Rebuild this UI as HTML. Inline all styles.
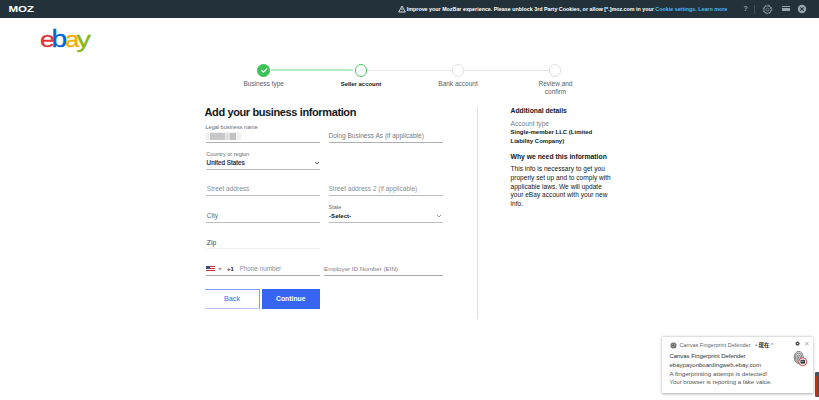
<!DOCTYPE html>
<html><head><meta charset="utf-8">
<style>
*{box-sizing:border-box;margin:0;padding:0}
html,body{width:819px;height:400px;overflow:hidden;background:#fff;font-family:"Liberation Sans",sans-serif;color:#111820}
.abs{position:absolute}
#bar{left:0;top:0;width:819px;height:17.5px;background:#23323a}
#moz{left:8.3px;top:5.2px;font-size:8px;font-weight:bold;color:#fff;letter-spacing:0px;line-height:8px;transform:scaleX(1.42);transform-origin:0 0}
#msg{left:406.8px;top:5.5px;font-size:5.35px;font-weight:bold;color:#fff;line-height:7px;white-space:nowrap}
#msg span{color:#4ab9f2}
.lbl{font-size:6.5px;color:#555e68;line-height:8.5px;text-align:center;width:60px;white-space:nowrap}
.circ{width:12.5px;height:12.5px;border-radius:50%;background:#fff;border:1px solid #e0e0e0}
.ph{font-size:6.55px;color:#8a9096;line-height:8px;white-space:nowrap}
.fl{font-size:5.55px;color:#626971;line-height:6px;white-space:nowrap}
.val{font-size:6px;color:#111820;line-height:8px;white-space:nowrap;font-weight:bold}
.ul{height:1px;background:#bbbec1}
.side{font-size:6.3px;line-height:9.3px;color:#111820}
</style></head><body>
<div class="abs" id="bar"></div>
<svg class="abs" style="left:0;top:0" width="60" height="17" viewBox="0 0 60 17"><text x="8.4" y="12.1" font-family="Liberation Sans, sans-serif" font-weight="bold" font-size="8.3" fill="#fff" textLength="25.7" lengthAdjust="spacingAndGlyphs">MOZ</text></svg>
<div class="abs" id="msg">Improve your MozBar experience. Please unblock 3rd Party Cookies, or allow [*.]moz.com in your <span>Cookie settings.</span> <span>Learn more</span></div>
<svg class="abs" style="left:397.6px;top:5.2px" width="8" height="8" viewBox="0 0 8 8"><path d="M4 1 L7.3 7 H0.7 Z" fill="none" stroke="#fff" stroke-width="0.8"/><path d="M4 3.2V5M4 5.7V6.3" stroke="#fff" stroke-width="0.7"/></svg>
<div class="abs" style="left:743.6px;top:5px;font-size:7px;color:#9aa5ab;font-weight:bold;line-height:8px">?</div>
<div class="abs" style="left:754px;top:5px;width:1px;height:8.5px;background:#435058"></div>
<svg class="abs" style="left:762.4px;top:3.5px" width="11" height="11" viewBox="0 0 11 11"><circle cx="5.5" cy="5.5" r="3.7" fill="none" stroke="#9aa5ab" stroke-width="0.75"/><circle cx="5.5" cy="5.5" r="4.3" fill="none" stroke="#9aa5ab" stroke-width="0.9" stroke-dasharray="1.69 1.69"/><circle cx="5.5" cy="5.5" r="1.5" fill="none" stroke="#9aa5ab" stroke-width="0.6"/></svg>
<div class="abs" style="left:781.8px;top:6.2px;width:8px;height:1px;background:#9aa5ab"></div>
<div class="abs" style="left:781.8px;top:8.2px;width:8px;height:2.7px;background:#9aa5ab"></div>
<svg class="abs" style="left:797px;top:3.9px" width="10" height="10" viewBox="0 0 10 10"><circle cx="5" cy="5" r="4.2" fill="#9aa5ab"/><path d="M3.3 3.3L6.7 6.7M6.7 3.3L3.3 6.7" stroke="#24313a" stroke-width="1.1"/></svg>

<!-- ebay logo -->
<svg class="abs" id="ebay" style="left:0;top:20px" width="120" height="40" viewBox="0 20 120 40" font-family="Liberation Sans, sans-serif" font-size="22.5" stroke-width="0.3">
<text transform="translate(40.0,46.6) scale(1.2,1)" fill="#e53238" stroke="#e53238">e</text>
<text transform="translate(51.5,46.6) scale(1.25,1.05)" fill="#0064d2" stroke="#0064d2">b</text>
<text transform="translate(65.2,46.6) scale(1.12,1)" fill="#f5af02" stroke="#f5af02">a</text>
<text transform="translate(76.5,46.6) scale(1.28,1)" fill="#86b817" stroke="#86b817">y</text>
</svg>

<!-- stepper -->
<div class="abs" style="left:271.4px;top:69.3px;width:81.6px;height:2px;background:#b7ebc2"></div>
<div class="abs" style="left:367px;top:70px;width:85px;height:1px;background:#e9e9e9"></div>
<div class="abs" style="left:464px;top:70px;width:85px;height:1px;background:#e5e5e5"></div>
<div class="abs circ" style="left:257.3px;top:64.2px;background:#3ec35a;border-color:#3ec35a"></div>
<svg class="abs" style="left:257.5px;top:64.2px" width="12.5" height="12.5" viewBox="0 0 12.5 12.5"><path d="M3.8 6.5L5.5 8.1L8.8 4.8" fill="none" stroke="#fff" stroke-width="1.2" stroke-linecap="round" stroke-linejoin="round"/></svg>
<div class="abs circ" style="left:354.8px;top:64.2px;border:0.9px solid #4ac765"></div>
<div class="abs circ" style="left:451.6px;top:64.2px"></div>
<div class="abs circ" style="left:548.8px;top:64.2px"></div>
<div class="abs lbl" style="left:233.7px;top:79.5px">Business type</div>
<div class="abs lbl" style="left:331px;top:79.5px;font-weight:bold;color:#111820;font-size:5.95px">Seller account</div>
<div class="abs lbl" style="left:428px;top:79.5px">Bank account</div>
<div class="abs lbl" style="left:525.5px;top:79.5px">Review and<br>confirm</div>

<!-- form -->
<div class="abs" style="left:204.5px;top:105px;font-size:11px;font-weight:bold;line-height:14px;color:#111820;white-space:nowrap;letter-spacing:-0.38px">Add your business information</div>
<div class="abs fl" style="left:205.5px;top:124.3px">Legal business name</div>
<div class="abs" style="left:205.5px;top:132px;width:35.5px;height:8.2px;background:#f1f1f1"></div><div class="abs" style="left:210px;top:133.4px;width:25.5px;height:6.4px;background:linear-gradient(90deg,#c6c6c6 0,#c9c9c9 55%,#e0e0e0 58%,#e0e0e0 75%,#c2c2c2 78%,#c2c2c2 100%)"></div>
<div class="abs ul" style="left:205.5px;top:141.5px;width:114px;background:#aeb1b4"></div>
<div class="abs ph" style="left:328.5px;top:132px;color:#747b82">Doing Business As (if applicable)</div>
<div class="abs ul" style="left:328.8px;top:141.5px;width:114px;background:#aeb1b4"></div>

<div class="abs fl" style="left:206.3px;top:151px">Country or region</div>
<div class="abs val" style="left:206.6px;top:158.5px;font-size:6.3px;font-weight:normal;letter-spacing:0.03px;-webkit-text-stroke:0.2px #1c2340;color:#1c2340">United States</div>
<svg class="abs" style="left:313.5px;top:160.5px" width="6" height="4" viewBox="0 0 6 4"><path d="M1 1L3 3L5 1" fill="none" stroke="#333" stroke-width="0.8"/></svg>
<div class="abs ul" style="left:205.5px;top:168.7px;width:114px"></div>

<div class="abs ph" style="left:206.8px;top:185px">Street address</div>
<div class="abs ul" style="left:205.5px;top:194.5px;width:114px"></div>
<div class="abs ph" style="left:328.5px;top:185px">Street address 2 (if applicable)</div>
<div class="abs ul" style="left:328.8px;top:194.5px;width:114px"></div>

<div class="abs ph" style="left:206.8px;top:211.5px;color:#62696f">City</div>
<div class="abs ul" style="left:205.5px;top:221.7px;width:114px"></div>
<div class="abs fl" style="left:328.5px;top:204px">State</div>
<div class="abs val" style="left:329.1px;top:211.7px;font-size:6.1px">-Select-</div>
<svg class="abs" style="left:436.3px;top:213.8px" width="6" height="4" viewBox="0 0 6 4"><path d="M1 1L3 3L5 1" fill="none" stroke="#808080" stroke-width="0.8"/></svg>
<div class="abs ul" style="left:328.8px;top:221.7px;width:114px"></div>

<div class="abs ph" style="left:206.8px;top:238.5px;color:#41474e;font-size:6.8px">Zip</div>
<div class="abs" style="left:206.5px;top:248.2px;width:113px;height:1px;background:#f0f0f0"></div>

<!-- phone -->
<div class="abs" style="left:206px;top:266px;width:9px;height:6px;background:repeating-linear-gradient(180deg,#c8313e 0,#c8313e 1px,#fff 1px,#fff 2px)"></div>
<div class="abs" style="left:206px;top:266px;width:4px;height:3.3px;background:#3c4a8a"></div>
<svg class="abs" style="left:217.5px;top:268px" width="4" height="3" viewBox="0 0 4 3"><path d="M0 0H4L2 2.4Z" fill="#999"/></svg>
<div class="abs val" style="left:227px;top:265px">+1</div>
<div class="abs ph" style="left:239.5px;top:265px;font-size:6.37px">Phone number</div>
<div class="abs ul" style="left:205.5px;top:275px;width:114px;background:#a9acaf"></div>
<div class="abs ph" style="left:324px;top:265px;font-size:6.2px;color:#7a8087">Employer ID Number (EIN)</div>
<div class="abs ul" style="left:324px;top:275px;width:119px;background:#a9acaf"></div>

<!-- buttons -->
<div class="abs" style="left:205px;top:289px;width:55px;height:20px;border:1px solid #7f9df7;border-bottom-color:#b9c9fb;border-left:none;font-size:7.2px;line-height:18px;text-align:center;color:#3665f3">Back</div>
<div class="abs" style="left:262px;top:289px;width:57.5px;height:20px;background:#3665f3;font-size:6.8px;font-weight:bold;line-height:20px;text-align:center;color:#fff">Continue</div>

<!-- sidebar -->
<div class="abs" style="left:477px;top:106.5px;width:1px;height:212px;background:#dedede"></div>
<div class="abs side" style="left:510.5px;top:106px;font-weight:bold;font-size:6.78px">Additional details</div>
<div class="abs side" style="left:510.5px;top:119px;color:#767f88;font-size:6.68px">Account type</div>
<div class="abs side" style="left:510.5px;top:128px;font-weight:bold;font-size:6px;line-height:8.6px">Single-member LLC (Limited<br>Liability Company)</div>
<div class="abs side" style="left:510.5px;top:152px;font-weight:bold;font-size:6.8px">Why we need this information</div>
<div class="abs side" style="left:510.5px;top:165.2px;line-height:8.7px;font-size:6.62px">This info is necessary to get you<br>properly set up and to comply with<br>applicable laws. We will update<br>your eBay account with your new<br>info.</div>

<!-- notification -->
<div class="abs" style="left:662.4px;top:337.4px;width:150.5px;height:55.6px;background:#fff;box-shadow:0 0.5px 3px rgba(0,0,0,.35);border-radius:1px"></div>
<svg class="abs" style="left:669.5px;top:341.5px" width="7" height="7" viewBox="0 0 7 7"><circle cx="3.5" cy="3.5" r="3" fill="#666"/><circle cx="3.5" cy="3.5" r="1.6" fill="none" stroke="#ddd" stroke-width="0.5"/></svg>
<div class="abs" style="left:679.5px;top:341px;transform:translateY(0.45px);font-size:5.54px;line-height:8px;color:#5f6368;white-space:nowrap;font-family:'Liberation Sans','Noto Sans CJK SC',sans-serif">Canvas Fingerprint Defender &nbsp;&nbsp;• <b style="color:#222;font-size:5.3px">现在</b> ^</div>
<div class="abs" style="left:669.5px;top:352px;transform:translateY(0.45px);font-size:5.93px;line-height:8px;color:#2a2a2a;white-space:nowrap">Canvas Fingerprint Defender</div>
<div class="abs" style="left:669.5px;top:361px;font-size:6.04px;line-height:8px;color:#3a3a3a;white-space:nowrap">ebaypayonboardingweb.ebay.com</div>
<div class="abs" style="left:669.5px;top:369.5px;font-size:6.26px;line-height:8px;color:#555;white-space:nowrap">A fingerprinting attempt is detected!</div>
<div class="abs" style="left:669.5px;top:378px;font-size:6.03px;line-height:8px;color:#555;white-space:nowrap">Your browser is reporting a fake value.</div>
<svg class="abs" style="left:793px;top:339px" width="20" height="10" viewBox="0 0 20 10"><circle cx="4.6" cy="4.6" r="1.25" fill="none" stroke="#444" stroke-width="1.1" /><circle cx="4.6" cy="4.6" r="1.8" fill="none" stroke="#444" stroke-width="0.8" stroke-dasharray="0.8 0.61"/><path d="M12.3 2.9L15.7 6.3M15.7 2.9L12.3 6.3" stroke="#777" stroke-width="0.6"/></svg>
<svg class="abs" style="left:792px;top:349.4px" width="18" height="18" viewBox="0 0 18 18"><g transform="translate(0.7,0.9)"><ellipse cx="6" cy="7.5" rx="4.9" ry="6.3" fill="#e8e8e8"/><g fill="none" stroke="#5a5a5a" stroke-width="0.75"><ellipse cx="6" cy="7.5" rx="4.5" ry="6"/><ellipse cx="6" cy="7.8" rx="3.1" ry="4.5"/><ellipse cx="6" cy="8" rx="1.7" ry="3"/><path d="M6 6.5V9.5"/></g></g><circle cx="10.8" cy="12.8" r="4" fill="#fff" stroke="#e0202a" stroke-width="0.8"/><path d="M8.5 10.8H13.1V14.6H8.5Z" fill="#333"/><path d="M9.3 12.3H11.9" stroke="#fff" stroke-width="0.6"/></svg>
<div class="abs" style="left:814.8px;top:372.3px;width:5px;height:25px;background:#47525d;border-radius:1.2px"></div>
<div class="abs" style="left:815.9px;top:376.4px;width:1.2px;height:19px;background:#d62d10"></div><div class="abs" style="left:815.2px;top:393.4px;width:2.6px;height:3px;border-radius:50%;background:#d62d10"></div>
</body></html>
